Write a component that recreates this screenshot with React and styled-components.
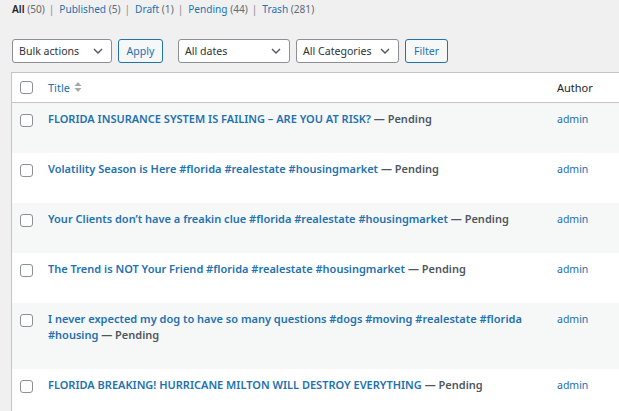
import React from "react";
import styled, { createGlobalStyle } from "styled-components";

const GlobalStyle = createGlobalStyle`
  html, body {
    margin: 0;
    padding: 0;
    background: #f0f0f1;
    font-family: "Noto Sans", "Open Sans", sans-serif;
    color: #3c434a;
    overflow: hidden;
  }
`;

const Page = styled.div`
  width: 619px;
  height: 411px;
  overflow: hidden;
  padding-left: 11px;
  box-sizing: border-box;
`;

const StatusLinks = styled.ul`
  list-style: none;
  margin: 0;
  padding: 1px 0 0 1px;
  height: 17px;
  display: flex;
  font-size: 10.1px;
  line-height: 16px;
  color: #646970;
  white-space: nowrap;
`;

const StatusItem = styled.li`
  & + &::before {
    content: "|";
    margin: 0 5px 0 4px;
    color: #8c8f94;
  }
`;

const StatusLabel = styled.span`
  color: ${(p) => (p.current ? "#1d2327" : "#2271b1")};
  font-weight: ${(p) => (p.current ? 600 : 400)};
`;

const Count = styled.span`
  color: #646970;
`;

const Toolbar = styled.div`
  display: flex;
  align-items: center;
  margin-top: 21px;
  padding-left: 1px;
  height: 24px;
`;

const Group = styled.div`
  display: flex;
  gap: 6px;
  margin-right: ${(p) => p.gap || 0}px;
`;

const Select = styled.div`
  width: ${(p) => p.w}px;
  height: 24px;
  box-sizing: border-box;
  background: #fff;
  border: 1px solid #8c8f94;
  border-radius: 3px;
  display: flex;
  align-items: center;
  justify-content: space-between;
  padding: 0 8px 0 6px;
  font-size: 10.6px;
  color: #2c3338;
`;

const Button = styled.div`
  width: ${(p) => p.w}px;
  height: 24px;
  box-sizing: border-box;
  border: 1px solid #2271b1;
  border-radius: 3px;
  background: #f6f7f7;
  color: #2271b1;
  font-size: 10.6px;
  display: flex;
  align-items: center;
  justify-content: center;
`;

const Table = styled.div`
  margin-top: 9px;
  width: 720px;
  background: #fff;
  border: 1px solid #c3c4c7;
  border-right: none;
`;

const Row = styled.div`
  display: grid;
  grid-template-columns: 28px 509px 1fr;
  background: ${(p) => (p.striped ? "#f6f7f7" : "#fff")};
  border-bottom: ${(p) => (p.head ? "1px solid #c3c4c7" : "none")};
`;

const CheckCell = styled.div`
  padding: ${(p) => (p.head ? 8 : 11)}px 0 0 8px;
`;

const Check = styled.span`
  display: block;
  width: 13px;
  height: 13px;
  box-sizing: border-box;
  border: 1px solid #8c8f94;
  border-radius: 3px;
  background: #fff;
`;

const HeadCell = styled.div`
  height: 29px;
  padding: 0 0 1px 8px;
  box-sizing: border-box;
  display: flex;
  align-items: center;
  font-size: 11px;
  color: ${(p) => (p.link ? "#2271b1" : "#1d2327")};
  gap: 4px;
`;

const TitleCell = styled.div`
  padding: 8px 8px 26px 8px;
  font-size: 11px;
  line-height: 16px;
`;

const TitleLink = styled.span`
  color: #2271b1;
  font-weight: 600;
`;

const State = styled.span`
  color: #50575e;
  font-weight: 600;
`;

const AuthorCell = styled.div`
  padding: 8px 8px 0 8px;
  font-size: 10.5px;
  line-height: 16px;
  color: #2271b1;
`;

const Chevron = () => (
  <svg width="10" height="6" viewBox="0 0 10 6">
    <path d="M1 1l4 4 4-4" fill="none" stroke="#50575e" strokeWidth="1.4" />
  </svg>
);

const SortArrows = () => (
  <svg width="8" height="12" viewBox="0 0 8 12">
    <path d="M4 1l3.5 4h-7z M4 11l3.5-4h-7z" fill="#a7aaad" />
  </svg>
);

const statuses = [
  { label: "All", count: 50, current: true },
  { label: "Published", count: 5 },
  { label: "Draft", count: 1 },
  { label: "Pending", count: 44 },
  { label: "Trash", count: 281 },
];

const posts = [
  "FLORIDA INSURANCE SYSTEM IS FAILING – ARE YOU AT RISK?",
  "Volatility Season is Here #florida #realestate #housingmarket",
  "Your Clients don’t have a freakin clue #florida #realestate #housingmarket",
  "The Trend is NOT Your Friend #florida #realestate #housingmarket",
  "I never expected my dog to have so many questions #dogs #moving #realestate #florida #housing",
  "FLORIDA BREAKING! HURRICANE MILTON WILL DESTROY EVERYTHING",
];

export default function App() {
  return (
    <Page>
      <GlobalStyle />
      <StatusLinks>
        {statuses.map((s) => (
          <StatusItem key={s.label}>
            <StatusLabel current={s.current}>{s.label}</StatusLabel>{" "}
            <Count>({s.count})</Count>
          </StatusItem>
        ))}
      </StatusLinks>

      <Toolbar>
        <Group gap={15}>
          <Select w={100}>
            Bulk actions <Chevron />
          </Select>
          <Button w={45}>Apply</Button>
        </Group>
        <Group>
          <Select w={112}>
            All dates <Chevron />
          </Select>
          <Select w={103}>
            All Categories <Chevron />
          </Select>
          <Button w={43}>Filter</Button>
        </Group>
      </Toolbar>

      <Table>
        <Row head>
          <CheckCell head>
            <Check />
          </CheckCell>
          <HeadCell link>
            Title <SortArrows />
          </HeadCell>
          <HeadCell>Author</HeadCell>
        </Row>
        {posts.map((title, i) => (
          <Row key={title} striped={i % 2 === 0}>
            <CheckCell>
              <Check />
            </CheckCell>
            <TitleCell>
              <TitleLink>{title}</TitleLink> <State>— Pending</State>
            </TitleCell>
            <AuthorCell>admin</AuthorCell>
          </Row>
        ))}
      </Table>
    </Page>
  );
}
